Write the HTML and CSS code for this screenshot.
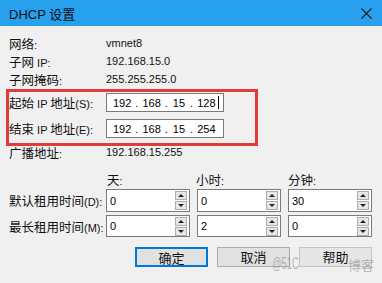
FILE: index.html
```html
<!DOCTYPE html>
<html lang="zh-CN">
<head>
    <meta charset="UTF-8">
    <title>DHCP 设置</title>
    <link rel="stylesheet" href="styles.css">
</head>
<body>
    <div class="dialog">
        <div class="titlebar">
            <span class="title">DHCP 设置</span>
            <svg class="close" width="11" height="11" viewBox="0 0 11 11">
                <path d="M0.5 0.5 L10.5 10.5 M10.5 0.5 L0.5 10.5" stroke="#1b1b1b" stroke-width="1.1" fill="none"/>
            </svg>
        </div>

        <div class="form">
            <div class="row">
                <span class="label">网络<span class="lat">:</span></span>
                <span class="value">vmnet8</span>
            </div>
            <div class="row">
                <span class="label">子网<span class="lat"> IP:</span></span>
                <span class="value">192.168.15.0</span>
            </div>
            <div class="row">
                <span class="label">子网掩码<span class="lat">:</span></span>
                <span class="value">255.255.255.0</span>
            </div>

            <div class="row ip-row">
                <span class="label">起始<span class="lat"> IP </span>地址<span class="lat">(S):</span></span>
                <div class="ip-box">
                    <span class="oct">192</span><span class="dot">.</span><span class="oct">168</span><span class="dot">.</span><span class="oct short">15</span><span class="dot">.</span><span class="oct">128</span><span class="caret"></span>
                </div>
            </div>
            <div class="row ip-row second">
                <span class="label">结束<span class="lat"> IP </span>地址<span class="lat">(E):</span></span>
                <div class="ip-box">
                    <span class="oct">192</span><span class="dot">.</span><span class="oct">168</span><span class="dot">.</span><span class="oct short">15</span><span class="dot">.</span><span class="oct">254</span>
                </div>
            </div>

            <div class="row broadcast">
                <span class="label">广播地址<span class="lat">:</span></span>
                <span class="value">192.168.15.255</span>
            </div>

            <div class="lease-grid">
                <span></span>
                <span class="col-head">天<span class="lat">:</span></span>
                <span class="col-head">小时<span class="lat">:</span></span>
                <span class="col-head">分钟<span class="lat">:</span></span>

                <span class="label">默认租用时间<span class="lat">(D):</span></span>
                <div class="spin"><span class="num">0</span><div class="arrows"><span class="up"></span><span class="down"></span></div></div>
                <div class="spin"><span class="num">0</span><div class="arrows"><span class="up"></span><span class="down"></span></div></div>
                <div class="spin"><span class="num">30</span><div class="arrows"><span class="up"></span><span class="down"></span></div></div>

                <span class="label">最长租用时间<span class="lat">(M):</span></span>
                <div class="spin"><span class="num">0</span><div class="arrows"><span class="up"></span><span class="down"></span></div></div>
                <div class="spin"><span class="num">2</span><div class="arrows"><span class="up"></span><span class="down"></span></div></div>
                <div class="spin"><span class="num">0</span><div class="arrows"><span class="up"></span><span class="down"></span></div></div>
            </div>

            <div class="buttons">
                <button class="btn default">确定</button>
                <button class="btn">取消</button>
                <button class="btn help">帮助</button>
            </div>
        </div>

        <!-- annotation + watermark drawn over the screenshot -->
        <div class="highlight"></div>
        <div class="watermark"><span class="wm-at">@51C</span><span class="wm-cn">博客</span></div>
    </div>
</body>
</html>
```

FILE: styles.css
```css
* {
    box-sizing: border-box;
    margin: 0;
    padding: 0;
}

body {
    background: #f0f0f0;
    font-family: 'Liberation Sans', 'Noto Sans CJK SC', sans-serif;
    font-size: 12px;
    color: #000;
}

.dialog {
    position: relative;
    width: 382px;
    height: 283px;
    overflow: hidden;
    background: #f0f0f0;
}

.titlebar {
    height: 26px;
    background: #27a0ee;
    display: flex;
    align-items: center;
    justify-content: space-between;
    padding: 0 10px 0 9px;
}

.title {
    font-size: 13px;
    color: #111;
}

.form {
    padding: 8px 10px 0 9px;
}

.row {
    display: flex;
    align-items: center;
    height: 18px;
}

.label,
.col-head {
    font-family: 'Noto Sans CJK SC', sans-serif;
    font-size: 12.5px;
    color: #111;
    white-space: pre;
}

.label {
    width: 97px;
    flex-shrink: 0;
}

.lat {
    font-family: 'Liberation Sans', sans-serif;
    font-size: 11px;
}

.value {
    font-size: 11px;
    color: #111;
}

.ip-row {
    height: 19px;
    margin-top: 5px;
}

.ip-row.second {
    margin-top: 7px;
}

.ip-box {
    width: 118px;
    height: 19px;
    background: #fff;
    border: 1px solid #7a7a7a;
    display: flex;
    align-items: center;
    padding-left: 6px;
    font-size: 11px;
    white-space: nowrap;
}

.dot {
    margin: 0 4px;
}

.oct.short {
    padding: 0 1px;
}

.caret {
    width: 1px;
    height: 13px;
    background: #000;
    margin-left: 2px;
}

.broadcast {
    margin-top: 5px;
}

.lease-grid {
    display: grid;
    grid-template-columns: 90px 84px 84px 84px;
    grid-template-rows: 20px 23px 22px;
    column-gap: 7px;
    margin-top: 8px;
    align-items: center;
}

.lease-grid .label {
    width: auto;
}

.lease-grid .label:nth-child(9) {
    margin-top: 6px;
}

.col-head {
    padding-left: 1px;
}

.lease-grid .col-head:nth-child(3) {
    margin-left: -2px;
}

.lease-grid .col-head:nth-child(4) {
    margin-left: -1px;
}

.spin {
    height: 23px;
    background: #fff;
    border: 1px solid #7a7a7a;
    display: flex;
    align-items: center;
    justify-content: space-between;
    padding: 0 2px 0 3px;
    font-size: 11px;
}

.lease-grid .spin:nth-child(n+10) {
    height: 22px;
    margin-top: 6px;
}

.arrows {
    display: flex;
    flex-direction: column;
    gap: 1px;
}

.arrows span {
    width: 12px;
    height: 9px;
    background: #e6e6e6;
    border: 1px solid #adadad;
    position: relative;
}

.arrows .up::after,
.arrows .down::after {
    content: "";
    position: absolute;
    left: 2px;
    top: 2px;
    border-left: 3px solid transparent;
    border-right: 3px solid transparent;
}

.arrows .up::after {
    border-bottom: 3px solid #222;
}

.arrows .down::after {
    border-top: 3px solid #222;
}

.buttons {
    display: flex;
    justify-content: flex-end;
    gap: 9px;
    margin-top: 13px;
}

.btn {
    width: 73px;
    height: 20px;
    background: #e1e1e1;
    border: 1px solid #adadad;
    font-family: 'Noto Sans CJK SC', sans-serif;
    font-size: 13px;
    color: #111;
    line-height: 18px;
}

.btn.default {
    border: 2px solid #0078d7;
}

.btn.help {
    background: #e6e6e6;
    border-color: #c4c4c4;
}

.highlight {
    position: absolute;
    left: 6px;
    top: 89px;
    width: 252px;
    height: 57px;
    border: 3px solid #e33b3b;
}

.watermark {
    position: absolute;
    left: 272px;
    top: 254px;
    width: 102px;
    display: flex;
    justify-content: space-between;
    align-items: center;
    color: rgba(140, 140, 140, 0.6);
}

.wm-at {
    font-family: 'Liberation Sans', sans-serif;
    font-size: 17px;
    display: inline-block;
    width: 26px;
    transform: scaleX(0.55);
    transform-origin: left center;
    white-space: nowrap;
}

.wm-cn {
    font-family: 'Noto Sans CJK SC', sans-serif;
    font-size: 13px;
}
```
